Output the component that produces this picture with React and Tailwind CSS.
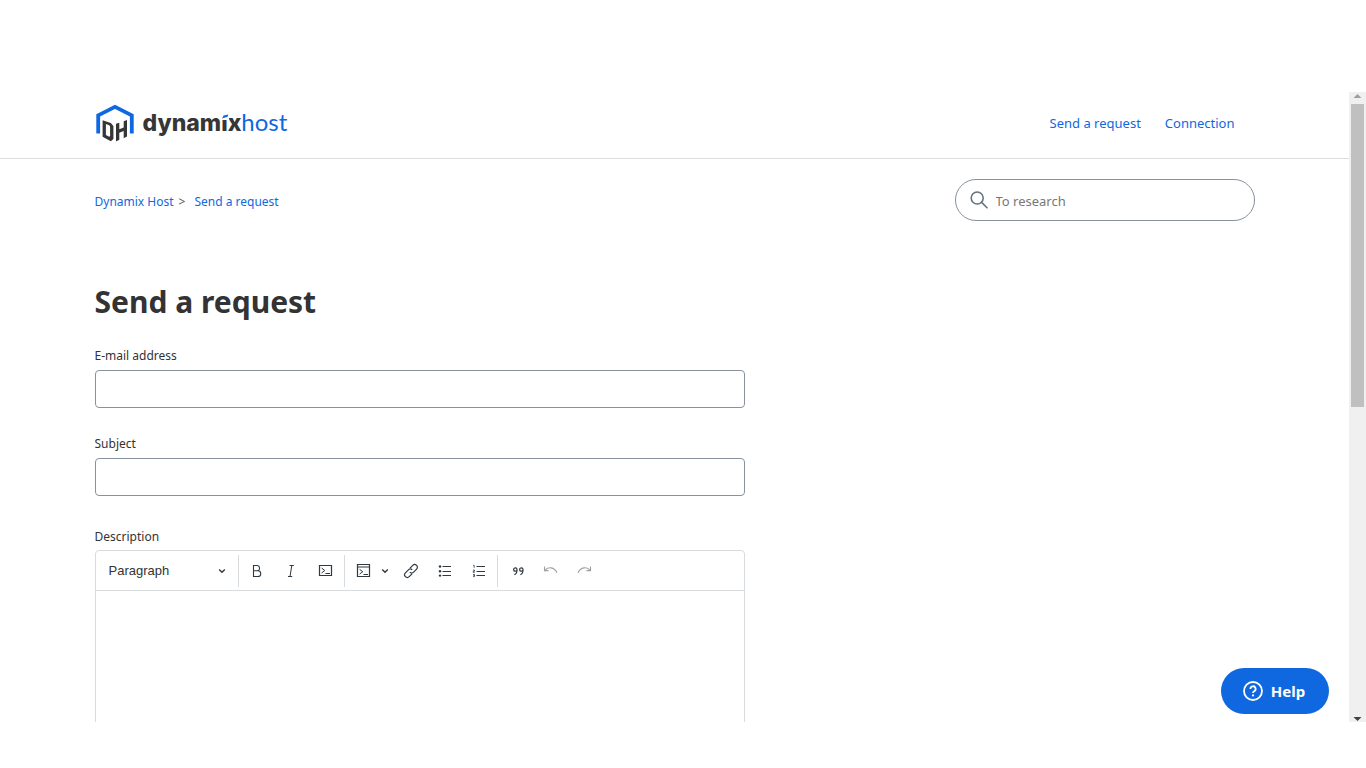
import React, { useState } from "react";
import clsx from "clsx";

const LINK = "text-[#1068e0] hover:underline";

function Logo() {
  return (
    <a href="#home" className="flex items-center gap-2">
      <svg width="40" height="40" viewBox="0 0 40 40" aria-hidden="true">
        <path
          d="M3.2 30.5V12.4L20 3.8l16.8 8.6v18.1"
          fill="none"
          stroke="#1068e0"
          strokeWidth="3.8"
        />
        <path
          d="M7.6 17.2l8.2 2.8 2.6 3v13l-2.6 2.2-8.2-4.4zM10.9 21v11l3.3 1.8.9-.8v-9.400l-.9-1.300z"
          fill="#363636"
          fillRule="evenodd"
        />
        <path
          d="M21 38.400V20.800l3.300-1.100v6.500l4.400-1.800v-6.200l3.300-1.100v16.400l-3.300 1.700v-7.300l-4.400 1.900v7z"
          fill="#363636"
        />
      </svg>
      <span className="flex items-baseline pb-0.5 leading-8">
        <span className="font-['Inter'] text-[23px] font-extrabold text-[#363636]">
          dynam
          <span className="relative">
            i
            <svg
              className="absolute left-0 top-1"
              width="8"
              height="8"
              viewBox="0 0 8 8"
              aria-hidden="true"
            >
              <path d="M0 0h8v7H0z" fill="#fff" />
              <path d="M1 5.4 2.6 2.4l4.8-1-.8 2.4z" fill="#1068e0" />
            </svg>
          </span>
          x
        </span>
        <span className="font-['Lato'] text-2xl text-[#1068e0]">host</span>
      </span>
    </a>
  );
}

function Header() {
  return (
    <header className="border-b border-[#dddddd]">
      <div className="mx-auto flex h-[66px] max-w-[1160px] items-center justify-between pb-1">
        <Logo />
        <nav className="flex gap-6 pr-5 text-[13px] leading-5">
          <a href="#request" className={LINK}>
            Send a request
          </a>
          <a href="#signin" className={LINK}>
            Connection
          </a>
        </nav>
      </div>
    </header>
  );
}

function SubNav() {
  return (
    <div className="flex items-center justify-between pt-5">
      <ol className="flex pt-1 text-xs leading-5">
        <li>
          <a href="#home" className={LINK}>
            Dynamix Host
          </a>
          <span className="px-[5px] text-[#555555]">&gt;</span>
        </li>
        <li className="pl-1">
          <a href="#request" className={LINK}>
            Send a request
          </a>
        </li>
      </ol>
      <label className="flex h-[42px] w-[300px] items-center gap-2 rounded-full border border-[#87929d] px-3.5">
        <svg
          width="18"
          height="18"
          viewBox="0 0 18 18"
          fill="none"
          stroke="#68737d"
          strokeWidth="1.6"
          strokeLinecap="round"
          aria-hidden="true"
        >
          <circle cx="7.2" cy="7" r="6" />
          <path d="m11.6 11.4 5.4 5.4" />
        </svg>
        <input
          type="search"
          aria-label="To research"
          placeholder="To research"
          className="min-w-0 flex-1 pt-0.5 text-[13px] leading-5 outline-none placeholder:text-[#777777]"
        />
      </label>
    </div>
  );
}

function Field({ id, label, type = "text", className }) {
  return (
    <div className={clsx("flex flex-col", className)}>
      <label htmlFor={id} className="text-xs leading-[22px]">
        {label}
      </label>
      <input
        id={id}
        type={type}
        className="mt-[3px] h-[38px] rounded border border-[#87929d] px-2 text-sm outline-none focus:border-[#1068e0]"
      />
    </div>
  );
}

function Icon({ children }) {
  return (
    <svg
      width="16"
      height="16"
      viewBox="0 0 16 16"
      fill="none"
      stroke="currentColor"
      aria-hidden="true"
    >
      {children}
    </svg>
  );
}

function ToolButton({ label, className = "w-[34px]", disabled, children }) {
  return (
    <button
      type="button"
      aria-label={label}
      disabled={disabled}
      className={clsx(
        "flex h-8 items-center justify-center text-[#2f3941] disabled:text-[#a0a0a0]",
        className
      )}
    >
      {children}
    </button>
  );
}

function Separator() {
  return <span className="h-8 w-px bg-[#d8dcde]" />;
}

function Chevron() {
  return (
    <svg
      width="8"
      height="6"
      viewBox="0 0 8 6"
      fill="none"
      stroke="#2f3941"
      strokeWidth="1.4"
      aria-hidden="true"
    >
      <path d="M1.2 1.4 4 4.2l2.8-2.8" />
    </svg>
  );
}

function Toolbar() {
  const [block, setBlock] = useState("Paragraph");

  return (
    <div className="flex h-10 items-center overflow-hidden border-b border-[#d8dcde]">
      <div className="relative w-[142px] shrink-0">
        <select
          aria-label="Text style"
          value={block}
          onChange={(e) => setBlock(e.target.value)}
          className="h-8 w-full appearance-none bg-transparent pl-[13px] pt-px font-['Liberation_Sans'] text-[13px] text-[#333333] outline-none"
        >
          <option>Paragraph</option>
          <option>Heading 1</option>
          <option>Heading 2</option>
        </select>
        <span className="pointer-events-none absolute inset-y-0 right-3 flex items-center">
          <Chevron />
        </span>
      </div>
      <Separator />

      <div className="flex pl-px pr-0.5">
        <ToolButton label="Bold">
          <Icon>
            <path
              d="M4.5 2.5h3.9a2.7 2.7 0 0 1 0 5.3H4.5zM4.5 7.8h4.4a2.8 2.8 0 0 1 0 5.7H4.5z"
              strokeWidth="1.1"
            />
          </Icon>
        </ToolButton>
        <ToolButton label="Italic">
          <Icon>
            <path d="M6.6 2.5h4.2M5 13.5h4.2M8.8 2.5 7 13.5" />
          </Icon>
        </ToolButton>
        <ToolButton label="Code">
          <Icon>
            <path d="M2.5 2.5h12v10h-12z" strokeWidth="1.2" />
            <path d="m4.600 5 3.200 2.500L4.600 10M8.500 10.500H13" />
          </Icon>
        </ToolButton>
      </div>
      <Separator />

      <div className="flex pl-[3px] pr-px">
        <ToolButton label="Code block" className="w-8">
          <Icon>
            <path d="M1.5 1.5h12v12h-12zM1.5 4h12" strokeWidth="1.2" />
            <path d="m3.600 6.400 3.200 2.300-3.200 2.300M7.500 11.500H12" />
          </Icon>
        </ToolButton>
        <ToolButton label="Code language" className="mr-1 w-2.5">
          <Chevron />
        </ToolButton>
        <ToolButton label="Link">
          <Icon>
            <path
              d="M7 5.2 9.8 2.4a2.6 2.6 0 0 1 3.8 3.8l-3 3a2.6 2.6 0 0 1-3.8 0M9 10.8l-2.8 2.8a2.6 2.6 0 0 1-3.8-3.8l3-3a2.6 2.6 0 0 1 3.8 0"
              strokeWidth="1.2"
            />
          </Icon>
        </ToolButton>
        <ToolButton label="Bulleted list">
          <Icon>
            <path d="M5.5 3.5H14M5.5 8.5H14M5.5 12.5H14" strokeWidth="1.2" />
            <g fill="currentColor" stroke="none">
              <circle cx="3" cy="3.5" r="1.2" />
              <circle cx="3" cy="8.3" r="1.2" />
              <circle cx="3" cy="12.6" r="1.2" />
            </g>
          </Icon>
        </ToolButton>
        <ToolButton label="Numbered list">
          <Icon>
            <path d="M5.5 3.5H14M5.5 8.5H14M5.5 12.5H14" strokeWidth="1.2" />
            <path
              d="M2.2 2.4h1v2.4M2 7.1h1.5v1.1H2.2v1.2h1.5M2 11.4h1.5v2.2H2M2.4 12.5h1.1"
              strokeWidth="0.8"
            />
          </Icon>
        </ToolButton>
      </div>
      <Separator />

      <div className="flex pl-[3px]">
        <ToolButton label="Block quote">
          <Icon>
            <path
              d="M7 6.4a1.7 1.7 0 1 0-1.6 1.8c.9 0 1.6-.8 1.6-1.8zm0 0c.2 2.6-.6 4.4-2.6 5.4M13 6.4a1.7 1.7 0 1 0-1.6 1.8c.9 0 1.6-.8 1.6-1.8zm0 0c.2 2.6-.6 4.4-2.6 5.4"
              strokeWidth="1.2"
            />
          </Icon>
        </ToolButton>
        <ToolButton label="Undo" disabled className="w-8">
          <Icon>
            <path d="M1.5 3.6v4h4M1.8 7.4c3-4 9.6-3.6 12.2 2.4" strokeWidth="1.1" />
          </Icon>
        </ToolButton>
        <ToolButton label="Redo" disabled>
          <Icon>
            <path d="M14.5 3.6v4h-4M14.2 7.4c-3-4-9.6-3.6-12.2 2.4" strokeWidth="1.1" />
          </Icon>
        </ToolButton>
      </div>
    </div>
  );
}

function RequestForm() {
  return (
    <form className="max-w-[650px]" onSubmit={(e) => e.preventDefault()}>
      <Field id="email" label="E-mail address" type="email" className="mt-[23px]" />
      <Field id="subject" label="Subject" className="mt-[25px]" />
      <div className="mt-[30px]">
        <label htmlFor="description" className="block text-xs leading-[22px]">
          Description
        </label>
        <div className="mt-0.5 rounded border border-[#d8dcde]">
          <Toolbar />
          <textarea
            id="description"
            className="block h-60 w-full resize-none p-3 text-sm outline-none"
          />
        </div>
      </div>
    </form>
  );
}

function ScrollTrack() {
  return (
    <div className="flex w-[17px] shrink-0 flex-col items-center bg-[#f0f0f0]">
      <svg width="17" height="12" viewBox="0 0 17 12" aria-hidden="true">
        <path d="M4.5 6h8l-4-4z" fill="#a0a0a0" />
      </svg>
      <div className="w-full flex-1 px-0.5">
        <div className="h-1/2 bg-[#c0c0c0]" />
      </div>
      <svg width="17" height="12" viewBox="0 0 17 12" aria-hidden="true">
        <path d="M4.5 7h8l-4 4z" fill="#404040" />
      </svg>
    </div>
  );
}

function HelpButton() {
  return (
    <button
      type="button"
      className="absolute bottom-2 right-[37px] flex h-[46px] w-[108px] items-center justify-center gap-2 rounded-full bg-[#1068e0] pr-0.5 text-[15px] font-bold text-white"
    >
      <svg
        width="20"
        height="20"
        viewBox="0 0 20 20"
        fill="none"
        stroke="currentColor"
        strokeWidth="1.8"
        aria-hidden="true"
      >
        <circle cx="10" cy="10" r="9" />
        <path d="M7.4 8a2.6 2.6 0 1 1 3.8 2.2c-.8.4-1.2.8-1.2 1.8" />
        <circle cx="10" cy="14.4" r="1.1" fill="currentColor" stroke="none" />
      </svg>
      Help
    </button>
  );
}

export default function App() {
  return (
    <div className="flex h-screen flex-col bg-white pb-[46px] pt-[92px] font-['Noto_Sans',sans-serif] text-[#333333]">
      <div className="relative flex min-h-0 flex-1 overflow-hidden">
        <div className="min-w-0 flex-1 overflow-hidden">
          <Header />
          <main className="mx-auto max-w-[1160px]">
            <SubNav />
            <h1 className="mt-[61px] text-3xl font-bold leading-10">
              Send a request
            </h1>
            <RequestForm />
          </main>
        </div>
        <ScrollTrack />
        <HelpButton />
      </div>
    </div>
  );
}
